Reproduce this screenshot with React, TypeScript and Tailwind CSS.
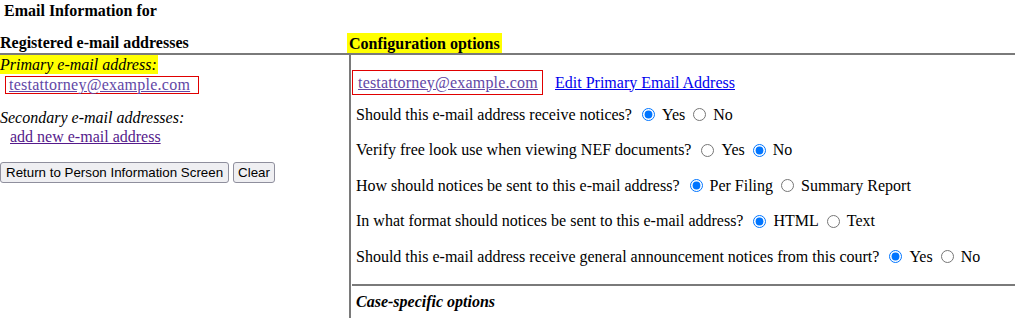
import React from "react";

function Radio({ name, checked }: { name: string; checked?: boolean }) {
  return (
    <input
      type="radio"
      name={name}
      defaultChecked={checked}
      className="w-[13px] h-[13px] ml-[6px] mr-[7px] accent-[#0075ff]"
    />
  );
}

function OptionRow({
  q,
  name,
  a,
  b,
  first,
}: {
  q: string;
  name: string;
  a: string;
  b: string;
  first: boolean;
}) {
  return (
    <div className="h-[35.5px] flex items-center pl-[4px] whitespace-nowrap">
      <span>{q}</span>
      <span className="ml-[4px]"></span>
      <Radio name={name} checked={first} />
      <span>{a}</span>
      <span className="ml-[2px]"></span>
      <Radio name={name} checked={!first} />
      <span>{b}</span>
    </div>
  );
}

export default function App() {
  const rows = [
    { q: "Should this e-mail address receive notices?", name: "n1", a: "Yes", b: "No", first: true },
    { q: "Verify free look use when viewing NEF documents?", name: "n2", a: "Yes", b: "No", first: false },
    { q: "How should notices be sent to this e-mail address?", name: "n3", a: "Per Filing", b: "Summary Report", first: true },
    { q: "In what format should notices be sent to this e-mail address?", name: "n4", a: "HTML", b: "Text", first: true },
    { q: "Should this e-mail address receive general announcement notices from this court?", name: "n5", a: "Yes", b: "No", first: true },
  ];

  return (
    <div className="w-[1015px] h-[318px] overflow-hidden bg-white text-black font-['Liberation_Serif',serif] text-[16px] leading-[18px]">
      <div className="pl-[4px] pt-[2px] h-[33px] font-bold">Email Information for</div>

      <div className="flex items-end h-[20px]">
        <div className="w-[347px] font-bold pb-[1px]">Registered e-mail addresses</div>
        <div className="font-bold bg-[#ffff00] px-[2px] h-[20px] leading-[22px]">Configuration options</div>
      </div>

      <div className="h-[2px] bg-[#7a7a7a]"></div>

      <div className="flex h-[263px]">
        <div className="w-[351px] border-r-2 border-[#7a7a7a]">
          <div>
            <span className="italic bg-[#ffff00] inline-block h-[19px] leading-[19px] pr-[1px]">
              Primary e-mail address:
            </span>
          </div>
          <div className="mt-[2px] ml-[5px] inline-block border border-[#e00000] pl-[3px] pr-[8px] leading-[16px]">
            <a href="#" className="underline tracking-[0.25px] text-[#6247a6]">testattorney@example.com</a>
          </div>
          <div className="mt-[15px] italic">Secondary e-mail addresses:</div>
          <div className="pl-[10px] mt-[1px]">
            <a href="#" className="underline text-[#551a8b]">add new e-mail address</a>
          </div>
          <div className="mt-[16px] flex gap-[4px] font-['Liberation_Sans',sans-serif] text-[13.333px]">
            <button className="h-[21px] px-[5px] bg-[#efeff2] border border-[#8f8f9d] rounded-[3px] leading-[19px]">
              Return to Person Information Screen
            </button>
            <button className="h-[21px] px-[4px] bg-[#efeff2] border border-[#8f8f9d] rounded-[3px] leading-[19px]">
              Clear
            </button>
          </div>
        </div>

        <div className="flex-1 pl-[1px]">
          <div className="mt-[15px] flex items-center h-[25px]">
            <div className="border border-[#e00000] h-[25px] w-[191px] pl-[5px] flex items-center">
              <a href="#" className="underline tracking-[0.2px] text-[#6247a6]">testattorney@example.com</a>
            </div>
            <a href="#" className="ml-[12px] underline text-[#0000ee]">Edit Primary Email Address</a>
          </div>
          <div className="mt-[2px]">
            {rows.map((r) => (
              <OptionRow key={r.name} {...r} />
            ))}
          </div>
          <div className="mt-[9px] h-[2px] bg-[#7a7a7a]"></div>
          <div className="pl-[4px] mt-[7px] font-bold italic">Case-specific options</div>
        </div>
      </div>
    </div>
  );
}
